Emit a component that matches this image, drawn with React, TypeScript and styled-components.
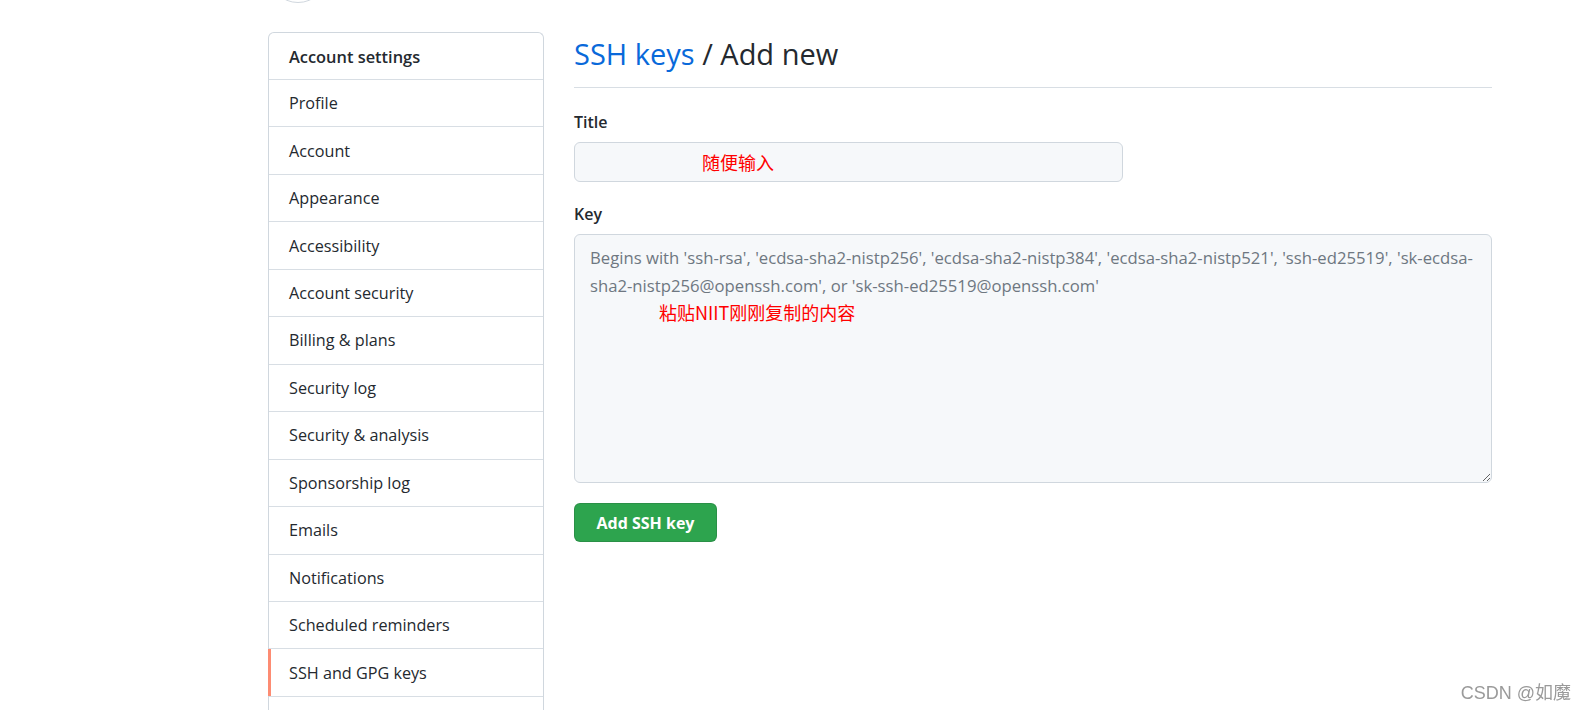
import React from "react";
import styled, { createGlobalStyle } from "styled-components";

const GlobalStyle = createGlobalStyle`
  body {
    margin: 0;
    background: #ffffff;
    color: #24292f;
    font-family: "Open Sans", "Noto Sans", "Noto Sans CJK SC", sans-serif;
  }
`;

const Page = styled.div`
  padding-left: 268px;
`;

const Avatar = styled.div`
  width: 60px;
  height: 60px;
  margin-top: -57px;
  margin-bottom: 29px;
  border-radius: 50%;
  border: 1px solid #d0d7de;
  box-sizing: border-box;
  background: #ffffff;
`;

const Layout = styled.div`
  display: flex;
  align-items: flex-start;
  gap: 30px;
`;

const SideMenu = styled.nav`
  width: 276px;
  box-sizing: border-box;
  border: 1px solid #d0d7de;
  border-bottom: none;
  border-radius: 6px 6px 0 0;
`;

const MenuHeader = styled.div`
  height: 46px;
  display: flex;
  align-items: center;
  padding-left: 20px;
  font-size: 16.4px;
  font-weight: 600;
  color: #24292f;
`;

const MenuItem = styled.a<{ $active?: boolean }>`
  position: relative;
  height: 47.46px;
  box-sizing: border-box;
  display: flex;
  align-items: center;
  padding-left: 20px;
  border-top: 1px solid #d8dee4;
  font-size: 16.2px;
  color: #24292f;
  text-decoration: none;

  &::before {
    content: "";
    display: ${(p) => (p.$active ? "block" : "none")};
    position: absolute;
    left: -1px;
    top: 0;
    bottom: 0;
    width: 3px;
    background: #fd8c73;
  }
`;

const Main = styled.main`
  width: 918px;
`;

const Heading = styled.h2`
  margin: 0 0 22px;
  padding: 2px 0 13px;
  border-bottom: 1px solid #d8dee4;
  font-size: 29px;
  font-weight: 400;
  line-height: 40px;
  color: #24292f;
`;

const Crumb = styled.a`
  color: #0969da;
  text-decoration: none;
`;

const Field = styled.div`
  position: relative;
  margin-bottom: 20px;
`;

const Label = styled.label`
  display: block;
  margin-bottom: 8px;
  font-size: 16px;
  font-weight: 600;
  line-height: 24px;
  color: #24292f;
`;

const TitleInput = styled.input`
  display: block;
  width: 549px;
  height: 40px;
  box-sizing: border-box;
  border: 1px solid #d0d7de;
  border-radius: 6px;
  background: #f6f8fa;
  font-family: inherit;
  font-size: 16px;
`;

const KeyArea = styled.textarea`
  display: block;
  width: 918px;
  height: 249px;
  box-sizing: border-box;
  padding: 9px 15px;
  border: 1px solid #d0d7de;
  border-radius: 6px;
  background: #f6f8fa;
  font-family: inherit;
  font-size: 16.7px;
  line-height: 28px;
  color: #24292f;

  &::placeholder {
    color: #6e7781;
  }
`;

const Note = styled.span<{ $left: number; $top: number; $size: number }>`
  position: absolute;
  left: ${(p) => p.$left}px;
  top: ${(p) => p.$top}px;
  font-family: "Noto Sans CJK SC", sans-serif;
  font-size: ${(p) => p.$size}px;
  line-height: 24px;
  color: #ff0000;
  pointer-events: none;
`;

const SubmitButton = styled.button`
  width: 143px;
  height: 39px;
  border: 1px solid rgba(27, 31, 36, 0.15);
  border-radius: 6px;
  background: #2da44e;
  color: #ffffff;
  font-family: inherit;
  font-size: 16px;
  font-weight: 700;
  cursor: pointer;
`;

const Watermark = styled.div`
  position: fixed;
  right: 15px;
  bottom: 6px;
  font-family: "Liberation Sans", "Noto Sans CJK SC", sans-serif;
  font-size: 18px;
  color: #9a9a9a;
`;

const menu = [
  "Profile",
  "Account",
  "Appearance",
  "Accessibility",
  "Account security",
  "Billing & plans",
  "Security log",
  "Security & analysis",
  "Sponsorship log",
  "Emails",
  "Notifications",
  "Scheduled reminders",
  "SSH and GPG keys",
  "",
];

const placeholder =
  "Begins with 'ssh-rsa', 'ecdsa-sha2-nistp256', 'ecdsa-sha2-nistp384', 'ecdsa-sha2-nistp521', 'ssh-ed25519', 'sk-ecdsa-\nsha2-nistp256@openssh.com', or 'sk-ssh-ed25519@openssh.com'";

export default function App() {
  return (
    <>
      <GlobalStyle />
      <Page>
        <Avatar />
        <Layout>
          <SideMenu>
            <MenuHeader>Account settings</MenuHeader>
            {menu.map((name, i) => (
              <MenuItem key={i} href="#" $active={name === "SSH and GPG keys"}>
                {name}
              </MenuItem>
            ))}
          </SideMenu>
          <Main>
            <Heading>
              <Crumb href="#">SSH keys</Crumb> / Add new
            </Heading>
            <Field>
              <Label>Title</Label>
              <TitleInput type="text" />
              <Note $left={128} $top={40} $size={18}>
                随便输入
              </Note>
            </Field>
            <Field>
              <Label>Key</Label>
              <KeyArea placeholder={placeholder} />
              <Note $left={85} $top={98} $size={18}>
                粘贴NIIT刚刚复制的内容
              </Note>
            </Field>
            <SubmitButton>Add SSH key</SubmitButton>
          </Main>
        </Layout>
      </Page>
      <Watermark>CSDN @如魔</Watermark>
    </>
  );
}
